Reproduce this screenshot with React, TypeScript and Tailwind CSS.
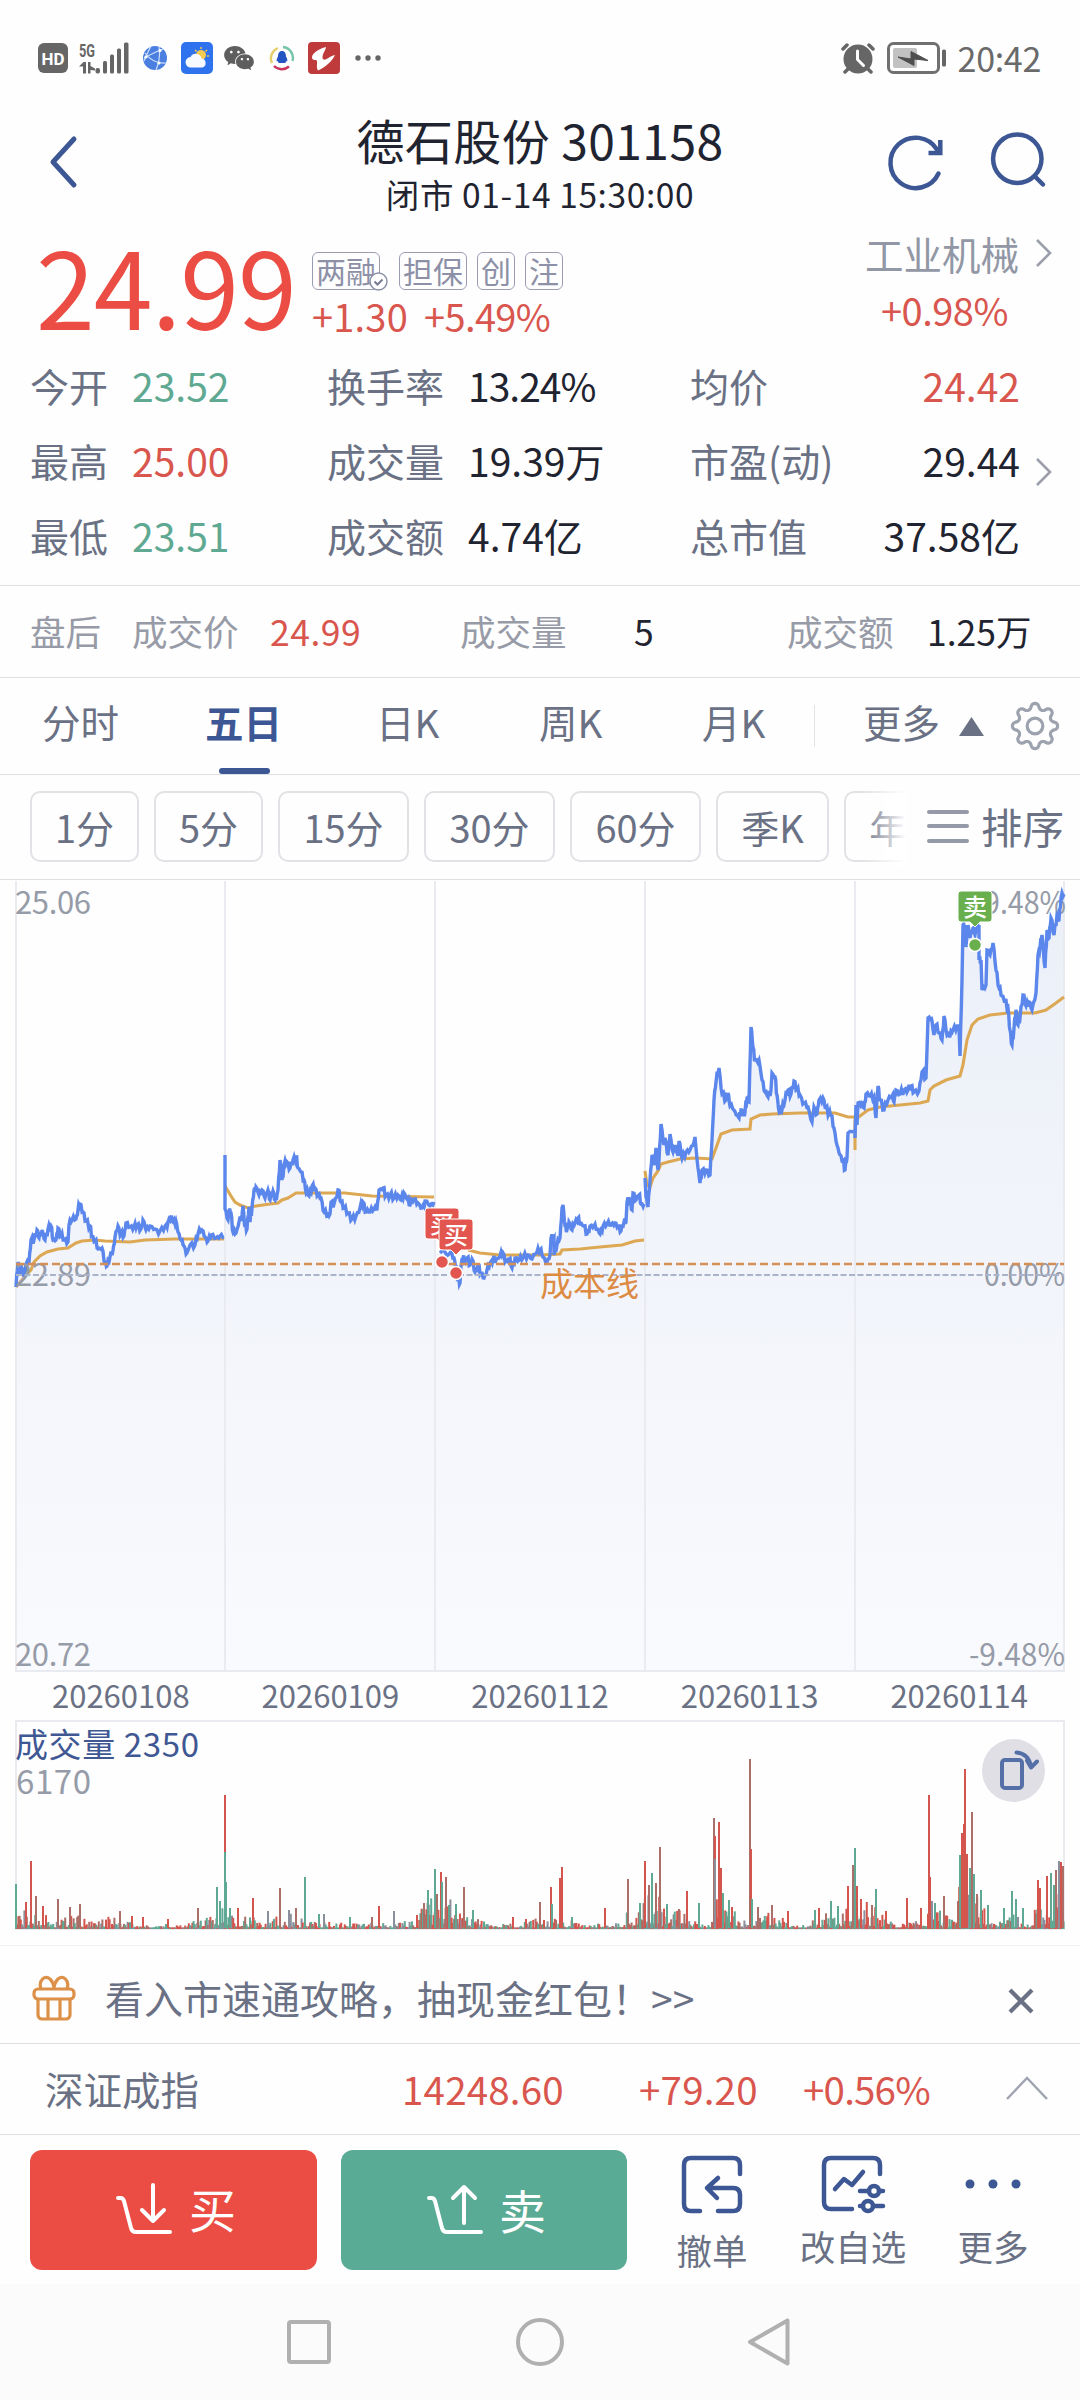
import { AiFillWechat } from "react-icons/ai";

type Point = [number, number];
type Quote = { label: string; value: string; color: string };

const RED = "#d4554d";
const GREEN = "#5fa893";
const GRAY = "#8b8f9c";
const BROWN = "#a96f68";

// three columns of the quote table, top to bottom
const openQuotes: Quote[] = [
  { label: "今开", value: "23.52", color: "text-[#5fa993]" },
  { label: "最高", value: "25.00", color: "text-[#d9564e]" },
  { label: "最低", value: "23.51", color: "text-[#5fa993]" },
];
const volumeQuotes: Quote[] = [
  { label: "换手率", value: "13.24%", color: "text-[#1f2430] tracking-[-1px]" },
  { label: "成交量", value: "19.39万", color: "text-[#1f2430]" },
  { label: "成交额", value: "4.74亿", color: "text-[#1f2430]" },
];
const valueQuotes: Quote[] = [
  { label: "均价", value: "24.42", color: "text-[#d9564e]" },
  { label: "市盈(动)", value: "29.44", color: "text-[#1f2430]" },
  { label: "总市值", value: "37.58亿", color: "text-[#1f2430]" },
];

const periods = [
  { name: "1分", width: "w-[109px]" },
  { name: "5分", width: "w-[109px]" },
  { name: "15分", width: "w-[131px]" },
  { name: "30分", width: "w-[131px]" },
  { name: "60分", width: "w-[131px]" },
  { name: "季K", width: "w-[113px]" },
  { name: "年K", width: "w-[113px]" },
];

const dates = ["20260108", "20260109", "20260112", "20260113", "20260114"];
const gridX = [16, 225, 435, 645, 855, 1064];

// one polyline per trading day
const priceDays: Point[][] = [
  [[16,1287],[18,1262],[20,1273],[22,1268],[24,1275],[26,1264],[29,1263],[31,1240],[34,1240],[37,1230],[39,1238],[42,1230],[45,1240],[48,1229],[51,1226],[53,1240],[56,1240],[58,1228],[61,1236],[64,1240],[68,1242],[69,1225],[72,1220],[76,1219],[78,1210],[80,1204],[83,1212],[86,1221],[90,1226],[92,1236],[95,1241],[98,1249],[102,1248],[105,1262],[107,1266],[110,1257],[113,1250],[115,1237],[118,1226],[121,1234],[124,1236],[126,1223],[130,1227],[134,1227],[137,1225],[141,1229],[143,1220],[146,1230],[150,1226],[155,1229],[160,1231],[165,1226],[168,1222],[171,1217],[173,1222],[176,1221],[178,1232],[181,1240],[184,1246],[187,1253],[190,1245],[195,1245],[198,1234],[202,1230],[205,1237],[208,1241],[211,1235],[216,1238],[220,1236],[224,1237]],
  [[225,1155],[225,1209],[228,1220],[229,1212],[231,1213],[233,1232],[236,1233],[239,1222],[242,1215],[243,1206],[245,1227],[247,1229],[249,1207],[250,1222],[252,1208],[254,1190],[256,1187],[259,1195],[262,1190],[265,1198],[268,1190],[270,1200],[273,1191],[275,1200],[277,1195],[278,1190],[280,1160],[282,1180],[284,1165],[287,1162],[290,1168],[293,1160],[296,1157],[298,1168],[301,1172],[304,1180],[306,1192],[309,1196],[312,1186],[315,1188],[318,1195],[321,1198],[324,1212],[328,1216],[330,1214],[331,1202],[334,1204],[338,1190],[341,1202],[344,1208],[348,1213],[352,1219],[356,1216],[360,1208],[363,1202],[366,1212],[370,1212],[374,1209],[377,1209],[379,1190],[383,1188],[386,1195],[390,1195],[394,1198],[398,1195],[401,1200],[404,1193],[407,1199],[410,1205],[414,1199],[418,1203],[422,1208],[425,1201],[430,1206],[434,1202]],
  [[440,1253],[450,1253],[454,1258],[456,1266],[458,1277],[460,1283],[461,1266],[463,1258],[465,1262],[467,1258],[470,1265],[472,1259],[475,1272],[478,1265],[481,1273],[484,1278],[487,1270],[490,1263],[493,1259],[496,1260],[500,1256],[503,1253],[506,1261],[509,1259],[512,1268],[515,1258],[519,1260],[523,1258],[528,1255],[532,1259],[537,1252],[540,1250],[543,1257],[547,1262],[550,1255],[551,1238],[554,1238],[554,1255],[557,1245],[560,1238],[562,1208],[563,1205],[565,1225],[567,1230],[569,1222],[572,1230],[575,1223],[578,1218],[580,1224],[584,1226],[587,1234],[590,1226],[594,1226],[597,1229],[600,1234],[603,1226],[607,1224],[611,1225],[615,1223],[618,1226],[621,1231],[624,1222],[626,1222],[627,1202],[630,1200],[632,1210],[633,1193],[636,1200],[639,1195],[641,1204],[644,1204]],
  [[645,1178],[646,1197],[648,1207],[650,1180],[652,1155],[654,1165],[656,1148],[658,1170],[659,1160],[661,1124],[664,1145],[665,1138],[668,1155],[670,1134],[673,1152],[676,1145],[678,1156],[679,1141],[682,1158],[686,1152],[690,1150],[694,1142],[695,1137],[698,1168],[700,1183],[702,1170],[706,1170],[710,1175],[712,1140],[714,1100],[716,1082],[719,1068],[722,1094],[726,1100],[728,1093],[730,1106],[734,1110],[737,1115],[739,1118],[741,1110],[743,1114],[745,1112],[747,1098],[749,1102],[751,1027],[753,1047],[755,1060],[759,1060],[762,1080],[765,1092],[768,1097],[771,1090],[772,1073],[775,1077],[777,1095],[779,1111],[782,1110],[785,1100],[788,1090],[791,1094],[794,1081],[797,1090],[800,1095],[804,1103],[808,1107],[812,1122],[814,1107],[817,1114],[819,1100],[823,1098],[826,1108],[829,1113],[831,1115],[834,1128],[837,1145],[840,1155],[843,1162],[845,1170],[847,1158],[848,1133],[854,1131]],
  [[855,1138],[856,1105],[857,1125],[858,1103],[862,1103],[864,1108],[866,1094],[870,1096],[874,1097],[876,1118],[878,1086],[880,1100],[884,1110],[888,1100],[892,1096],[894,1102],[896,1090],[900,1094],[904,1090],[908,1090],[911,1086],[914,1092],[919,1091],[922,1072],[926,1078],[927,1050],[928,1018],[931,1017],[934,1035],[936,1025],[939,1033],[942,1040],[944,1016],[947,1035],[950,1036],[953,1030],[957,1026],[959,1027],[960,1056],[962,980],[963,925],[965,925],[966,947],[968,925],[970,938],[973,928],[975,935],[977,926],[979,925],[979,960],[981,960],[982,990],[986,985],[987,950],[990,955],[993,943],[996,970],[999,988],[1002,996],[1005,1000],[1008,1008],[1010,1030],[1012,1045],[1014,1028],[1016,1010],[1018,1025],[1020,1018],[1023,995],[1026,1006],[1029,1002],[1032,1010],[1036,993],[1038,955],[1040,948],[1042,935],[1045,968],[1047,930],[1049,938],[1051,918],[1054,935],[1057,915],[1059,920],[1061,898],[1064,894]],
];

const averageDays: Point[][] = [
  [[16,1287],[22,1280],[28,1273],[31,1270],[34,1262],[40,1256],[47,1252],[58,1249],[68,1248],[76,1243],[82,1241],[95,1240],[105,1241],[130,1242],[145,1240],[175,1239],[224,1239]],
  [[225,1186],[228,1191],[231,1196],[235,1202],[240,1205],[248,1208],[256,1206],[270,1204],[278,1203],[282,1200],[288,1198],[296,1193],[310,1193],[345,1193],[372,1196],[434,1197]],
  [[468,1250],[480,1253],[500,1255],[540,1255],[560,1254],[562,1250],[580,1249],[600,1247],[622,1245],[635,1241],[644,1240]],
  [[645,1171],[647,1185],[650,1187],[653,1178],[658,1171],[661,1164],[668,1162],[680,1159],[696,1158],[712,1159],[716,1148],[721,1134],[732,1130],[750,1129],[751,1119],[760,1115],[772,1114],[800,1113],[835,1113],[848,1117],[854,1117]],
  [[855,1150],[855,1120],[860,1116],[868,1110],[880,1107],[900,1105],[920,1103],[928,1101],[930,1090],[934,1086],[946,1080],[960,1076],[963,1065],[967,1040],[972,1025],[978,1019],[990,1015],[1008,1013],[1035,1013],[1046,1010],[1056,1003],[1064,997]],
];

// usual bar height along the volume pane
const volumeLevel: Point[] = [[16,16],[40,16],[55,8],[75,14],[90,6],[105,12],[130,6],[150,3],[175,5],[190,8],[210,12],[222,18],[235,20],[255,10],[290,14],[310,7],[350,6],[395,5],[415,12],[440,36],[458,20],[475,12],[490,4],[520,5],[540,10],[565,8],[600,5],[612,3],[620,12],[635,18],[655,35],[665,20],[690,16],[700,5],[710,3],[713,40],[722,40],[730,18],[745,10],[755,18],[775,12],[785,10],[800,2],[830,16],[850,24],[858,35],[875,20],[895,6],[920,8],[935,20],[955,6],[962,60],[972,55],[985,20],[1000,8],[1015,15],[1030,2],[1040,40],[1050,20],[1064,55]];

// x, height, colour of the bars that stand out
const volumePeaks: [number, number, string][] = [
  [16,44,GREEN],[31,67,RED],[26,26,RED],[36,32,BROWN],[43,22,RED],[58,29,BROWN],[70,21,BROWN],[80,24,BROWN],[120,17,BROWN],[132,12,RED],[143,11,RED],[168,9,RED],[198,20,BROWN],[217,41,GREEN],[220,27,GREEN],[225,133,RED],[225,76,GREEN],[226,46,GREEN],[230,20,GREEN],[238,20,RED],[253,30,RED],[268,17,GRAY],[280,40,BROWN],[289,18,GRAY],[296,20,BROWN],[305,51,GREEN],[319,14,GREEN],[324,14,GRAY],[350,11,GREEN],[372,11,BROWN],[379,22,RED],[394,17,GRAY],[417,13,RED],[424,25,BROWN],[428,38,GREEN],[435,59,GREEN],[437,34,BROWN],[441,56,RED],[442,46,GREEN],[446,51,BROWN],[449,23,GREEN],[456,24,GREEN],[464,41,BROWN],[473,18,GREEN],[513,11,RED],[526,9,RED],
  [540,26,BROWN],[551,41,RED],[552,24,GREEN],[562,61,RED],[560,50,RED],[572,11,GREEN],[605,20,RED],[628,49,BROWN],[640,25,GREEN],[645,67,RED],[649,43,BROWN],[652,55,GREEN],[656,45,BROWN],[660,81,BROWN],[667,24,GREEN],[679,19,BROWN],[687,37,RED],[699,25,GREEN],[714,110,BROWN],[715,92,RED],[715,69,GRAY],[719,106,RED],[721,60,RED],[723,35,GREEN],[729,28,GREEN],[732,21,RED],[750,169,BROWN],[751,79,RED],[752,29,GREEN],[758,21,BROWN],[772,23,BROWN],[788,17,RED],[815,18,GREEN],[819,20,RED],[831,27,GREEN],[838,22,GREEN],[848,42,RED],[853,63,BROWN],[855,80,GREEN],[857,42,RED],[861,29,RED],[872,23,BROWN],[876,39,GREEN],[886,17,RED],[907,30,RED],[921,20,RED],[929,133,RED],[930,51,RED],[932,27,GRAY],[935,25,GREEN],[944,32,BROWN],[960,73,GREEN],[962,95,RED],[964,104,RED],[965,159,RED],[967,74,RED],[970,60,GREEN],[972,116,BROWN],[974,54,GREEN],[977,34,BROWN],[981,38,GREEN],[988,23,GREEN],[1004,20,GREEN],[1012,37,GREEN],[1016,29,GREEN],[1023,20,GREEN],[1038,48,RED],[1040,40,RED],[1047,52,RED],[1051,55,GREEN],[1054,43,GREEN],[1056,58,BROWN],[1059,67,GRAY],[1061,66,RED],[1063,62,BROWN],
];

// repeatable noise between 0 and 1
function noise(n: number) {
  const v = Math.sin(n * 12.9898 + 4.1) * 43758.5453;
  return v - Math.floor(v);
}

function roughen(points: Point[]): Point[] {
  const out: Point[] = [];
  points.forEach(([x, y], i) => {
    out.push([x, y]);
    const after = points[i + 1];
    if (after && after[0] - x >= 2) {
      out.push([x + (after[0] - x) * 0.35, y + (after[1] - y) * 0.35 - 4 * noise(x)]);
      out.push([x + (after[0] - x) * 0.7, y + (after[1] - y) * 0.7 + 4 * noise(x + 7)]);
    }
  });
  return out;
}

function toPath(points: Point[]) {
  return "M" + points.map(([x, y]) => `${x.toFixed(1)} ${y.toFixed(1)}`).join("L");
}

function levelAt(x: number) {
  const i = volumeLevel.findIndex((p) => p[0] >= x);
  if (i <= 0) return volumeLevel[0][1];
  const [x0, y0] = volumeLevel[i - 1];
  const [x1, y1] = volumeLevel[i];
  return y0 + ((y1 - y0) * (x - x0)) / (x1 - x0);
}

const gearPath =
  toPath(
    Array.from({ length: 128 }, (_, i): Point => {
      const a = (i / 128) * Math.PI * 2;
      const c = Math.cos(8 * a);
      const r = 19.8 + 2.8 * Math.sign(c) * Math.pow(Math.abs(c), 0.6);
      return [25 + r * Math.sin(a), 25 - r * Math.cos(a)];
    })
  ) + "Z";

function StatusBar() {
  return (
    <div className="flex h-[111px] items-center pt-[5px] pl-[38px] pr-[39px]">
      <svg width="30" height="30" viewBox="0 0 30 30">
        <rect width="30" height="30" rx="6" fill="#666" />
        <text x="3.500" y="21.500" fontSize="17" fontWeight="700" fill="#fff" fontFamily="Roboto, sans-serif" textLength="23" lengthAdjust="spacingAndGlyphs">HD</text>
      </svg>
      <svg className="ml-[11px] overflow-visible" width="50" height="32" viewBox="79 42 50 32" fill="#666">
        <text x="79" y="56.500" fontSize="19" fontWeight="700" fontFamily="Roboto, sans-serif" textLength="16" lengthAdjust="spacingAndGlyphs">5G</text>
        <path d="M79 66.500l4.500-4.500h2.500v11.500h-3v-7zM88 62h2.500v4l4.500 2.500v2l-4.500-.5v3.500H88z" />
        <rect x="95.500" y="68" width="4.500" height="5.500" rx="2" />
        <rect x="103" y="61" width="4" height="12.500" rx="1.500" />
        <rect x="110" y="54.500" width="4" height="19" rx="1.500" />
        <rect x="117" y="48.500" width="4" height="25" rx="1.500" />
        <rect x="124" y="42.500" width="4.500" height="31" rx="1.500" />
      </svg>
      <svg className="ml-[14px]" width="24" height="24" viewBox="0 0 24 24">
        <circle cx="12" cy="12" r="12" fill="#4a7fe0" />
        <path d="M1 12Q12 6 20 3M16 1Q18 12 13 24M2 7Q10 18 23 17M1 15Q3 10 8 0" fill="none" stroke="#cfe0ff" strokeWidth="1.200" />
        <circle cx="17" cy="4.500" r="1.600" fill="#fff" />
        <circle cx="3" cy="11" r="1.600" fill="#fff" />
        <circle cx="16" cy="17" r="1.600" fill="#fff" />
      </svg>
      <svg className="ml-[14px]" width="32" height="32" viewBox="0 0 32 32">
        <rect width="32" height="32" rx="5" fill="#2f72ee" />
        <path d="M20 5v2M26 8l-1.500 1.500M14 8l1.500 1.500M28 14h-2" stroke="#f3c64e" strokeWidth="1.500" />
        <circle cx="20" cy="13" r="5" fill="#f8cb4f" />
        <path d="M10 25.500a5.200 5.200 0 01-.5-10.400 6 6 0 0111.200 1.500 4.600 4.600 0 01.8 8.900z" fill="#f6f9ff" />
      </svg>
      <AiFillWechat className="ml-[9px]" size={34} color="#5e5e5e" />
      <svg className="ml-[13px]" width="26" height="26" viewBox="0 0 26 26" fill="none" strokeWidth="2.400">
        <path d="M3 18A11 11 0 019 3" stroke="#e6cf6a" />
        <path d="M14 2A11 11 0 0123.500 16" stroke="#74c4ab" />
        <path d="M5 21A11 11 0 0020 21.500" stroke="#c8345c" />
        <path d="M13 6c3 0 4 2.500 4 5.500 1 1.500 1.500 3 1.300 5-.8 0-1-.4-1-.4l-1 2H9.700l-1-2s-.2.400-1 .4c-.2-2 .3-3.500 1.300-5C9 8.500 10 6 13 6z" fill="#2453c4" />
      </svg>
      <svg className="ml-[13px]" width="32" height="32" viewBox="0 0 32 32">
        <rect width="32" height="32" rx="4" fill="#bf3a3a" />
        <path d="M18 5C11 7 4 11 4 15.500c0 2 1.500 2.500 4 2.500 2.500.3-.5 7 2 10.500 7-3 14-9 17-15.500-3.500.5-7 3.500-9.500 4.500-3 .8-3.500-1.500-2.500-5C16 9.500 18 7 18 5z" fill="#fff" />
      </svg>
      <svg className="ml-[15px]" width="26" height="6" viewBox="0 0 26 6" fill="#666">
        <circle cx="3" cy="3" r="2.700" />
        <circle cx="13" cy="3" r="2.700" />
        <circle cx="23" cy="3" r="2.700" />
      </svg>
      <svg className="ml-auto" width="34" height="32" viewBox="0 0 34 32">
        <circle cx="17" cy="17" r="14.500" fill="#666" />
        <path d="M2 7l4-4M32 7l-4-4M4 30l4-4M30 30l-4-4" stroke="#666" strokeWidth="3.500" strokeLinecap="round" />
        <path d="M16.500 9v8.500l6 6" fill="none" stroke="#fff" strokeWidth="3" strokeLinecap="round" />
      </svg>
      <svg className="ml-3" width="60" height="32" viewBox="0 0 60 32">
        <rect x="1.500" y="1.500" width="50" height="29" rx="5" fill="#fff" stroke="#707070" strokeWidth="3" />
        <rect x="6" y="6" width="24" height="20" rx="2" fill="#c2c2c2" />
        <path d="M11 15l13 2v-7.500l17 9L27 17v6.500z" fill="#4f4f4f" stroke="#4f4f4f" strokeWidth="1" />
        <rect x="55" y="7.500" width="4" height="17" rx="1.500" fill="#666" />
      </svg>
      <span className="ml-[11px] text-[34px] leading-10 tracking-[-0.300px] text-[#6a6a6a]">20:42</span>
    </div>
  );
}

function Header() {
  return (
    <div className="flex h-[105px] items-start text-[#1f2430]">
      <div className="w-[270px] pt-[23px] pl-[47px]">
        <svg width="34" height="56" viewBox="0 0 34 56">
          <path d="M27 5L6 28l21 23" fill="none" stroke="#3c5794" strokeWidth="5" strokeLinecap="round" strokeLinejoin="round" />
        </svg>
      </div>
      <div className="flex flex-1 flex-col items-center">
        <h1 className="text-[48px] leading-14 tracking-[0.400px] whitespace-nowrap">德石股份 301158</h1>
        <p className="mt-[6px] text-[33.500px] leading-[42px] tracking-[0.600px] whitespace-nowrap">闭市 01-14 15:30:00</p>
      </div>
      <div className="flex w-[270px] pt-[20px] pl-[76px]">
        <svg width="60" height="64" viewBox="886 131 60 64" fill="none" stroke="#3c5794" strokeWidth="4.500">
          <path d="M938.500 173.500A25.200 25.200 0 11937 149.500" strokeLinecap="round" />
          <path d="M940.300 140v13H928.500" />
        </svg>
        <svg className="ml-[42px]" width="60" height="64" viewBox="988 131 60 64" fill="none" stroke="#3c5794" strokeWidth="4.500">
          <circle cx="1017.300" cy="158.800" r="24.200" />
          <path d="M1035 176.500l8 8" strokeLinecap="round" />
        </svg>
      </div>
    </div>
  );
}

function Tag({ children }: { children: string }) {
  return (
    <span className="flex h-[38px] items-center rounded-[6px] border-[1.500px] border-[#9a9db2] px-[3px] pb-[2px] text-[30px] leading-9 text-[#8d90a7]">
      {children}
    </span>
  );
}

function Chevron() {
  return (
    <svg width="18" height="30" viewBox="0 0 18 30">
      <path d="M2 2l13 13L2 28" fill="none" stroke="#9a9fab" strokeWidth="2.600" />
    </svg>
  );
}

function PriceSummary() {
  return (
    <div className="flex h-[132px] items-start">
      <div className="mt-[23px] ml-[36px] w-[276px] text-[106px] leading-[90px] tracking-[-1px] text-[#eb4d44]">24.99</div>
      <div className="mt-[36px]">
        <div className="flex">
          <div className="relative">
            <Tag>两融</Tag>
            <svg className="absolute -right-[8px] -bottom-[1px]" width="19" height="19" viewBox="0 0 19 19">
              <circle cx="9.500" cy="9.500" r="8.500" fill="#fff" stroke="#8d90a7" strokeWidth="1.500" />
              <path d="M5.500 9.500l3 3 5-5" fill="none" stroke="#777b94" strokeWidth="2" />
            </svg>
          </div>
          <div className="ml-[19px]"><Tag>担保</Tag></div>
          <div className="ml-[10px]"><Tag>创</Tag></div>
          <div className="ml-[10px]"><Tag>注</Tag></div>
        </div>
        <div className="mt-[6px] flex gap-4 text-[38px] leading-10 text-[#d9564e]">
          <span className="tracking-[0.200px]">+1.30</span>
          <span className="tracking-[-0.600px]">+5.49%</span>
        </div>
      </div>
      <div className="mt-[17px] mr-[27px] ml-auto w-[188px]">
        <div className="flex items-center justify-between text-[38.500px] leading-10 text-[#9297a5]">
          工业机械
          <Chevron />
        </div>
        <p className="mt-[17px] pl-[16px] text-[38px] leading-10 tracking-[-0.500px] text-[#d9564e]">+0.98%</p>
      </div>
    </div>
  );
}

function QuoteColumn({ quotes, labelWidth, right }: { quotes: Quote[]; labelWidth: string; right?: boolean }) {
  return (
    <div className={right ? "w-[330px]" : ""}>
      {quotes.map((q) => (
        <div key={q.label} className={"flex h-[75px] items-center " + (right ? "justify-between" : "")}>
          <span className={labelWidth + " text-[#6a7184]"}>{q.label}</span>
          <span className={q.color}>{q.value}</span>
        </div>
      ))}
    </div>
  );
}

function QuoteTable() {
  return (
    <div className="flex h-[238px] border-b border-[#dfe0e3] pl-[30px] text-[39px] leading-none whitespace-nowrap">
      <div className="w-[297px]"><QuoteColumn quotes={openQuotes} labelWidth="w-[102px]" /></div>
      <div className="w-[363px]"><QuoteColumn quotes={volumeQuotes} labelWidth="w-[141px]" /></div>
      <QuoteColumn quotes={valueQuotes} labelWidth="" right />
      <div className="pt-[109px] pl-[15px]"><Chevron /></div>
    </div>
  );
}

function AfterHours() {
  return (
    <div className="flex h-[92px] items-center border-b border-[#dfe0e3] pb-[2px] pl-[30px] text-[35.500px] leading-none text-[#979ba7]">
      <span className="w-[102px]">盘后</span>
      <span className="w-[138px]">成交价</span>
      <span className="w-[190px] tracking-[0.500px] text-[#d9564e]">24.99</span>
      <span className="w-[174px]">成交量</span>
      <span className="w-[153px] text-[#1f2430]">5</span>
      <span className="w-[140px]">成交额</span>
      <span className="text-[#1f2430]">1.25万</span>
    </div>
  );
}

function Tabs() {
  return (
    <div className="flex h-[97px] border-b border-[#dfe0e3] pl-[42px] text-[38.500px] leading-[87px] text-[#6a7184]">
      <span className="w-[163px]">分时</span>
      <div className="flex w-[171px] flex-col">
        <span className="font-bold text-[#3c5794]">五日</span>
        <span className="mt-[3px] ml-[14px] h-[6px] w-[51px] rounded-[3px] bg-[#3c5794]" />
      </div>
      <span className="w-[163px]">日K</span>
      <span className="w-[163px]">周K</span>
      <span className="w-[112px]">月K</span>
      <span className="mt-[27px] h-[42px] w-px bg-[#e2e3e7]" />
      <span className="ml-[48px] w-[96px]">更多</span>
      <svg className="mt-[39px]" width="25" height="19" viewBox="0 0 25 19">
        <path d="M12.500 0L25 19H0z" fill="#6a7184" />
      </svg>
      <svg className="mt-[23px] ml-[26px]" width="50" height="50" viewBox="0 0 50 50" fill="none" stroke="#9da2af" strokeWidth="3.200" strokeLinejoin="round">
        <path d={gearPath} />
        <circle cx="25" cy="25" r="7.800" />
      </svg>
    </div>
  );
}

function PeriodBar() {
  return (
    <div className="relative flex h-[105px] border-b border-[#dfe0e3] pt-4 pl-[30px]">
      <div className="flex w-[875px] gap-[15px] overflow-hidden">
        {periods.map((p) => (
          <span
            key={p.name}
            className={p.width + " flex h-[71px] shrink-0 items-center justify-center rounded-[10px] border-2 border-[#e1e2e5] text-[38px] leading-none text-[#6a7184]"}
          >
            {p.name}
          </span>
        ))}
      </div>
      {/* fade over the cut-off pill */}
      <div className="absolute top-3 left-[862px] h-20 w-[44px] bg-gradient-to-r from-white/0 to-white" />
      <svg className="mt-[17px] ml-[22px]" width="42" height="36" viewBox="0 0 42 36" stroke="#949aa8" strokeWidth="4" strokeLinecap="round">
        <path d="M2 4h38M2 18h38M2 33h38" />
      </svg>
      <span className="ml-[12px] h-[71px] text-[41.500px] leading-[70px] text-[#6a7184]">排序</span>
    </div>
  );
}

function TradeMarker({ x, y, dotX, dotY, text, color }: { x: number; y: number; dotX: number; dotY: number; text: string; color: string }) {
  return (
    <g>
      <circle cx={dotX} cy={dotY} r="6.500" fill={color} stroke="#fff" strokeWidth="1.500" />
      <path d={`M${x + 3} ${y}h28a3 3 0 013 3v25a3 3 0 01-3 3h-9l-5 5-5-5h-9a3 3 0 01-3-3v-25a3 3 0 013-3z`} fill={color} stroke="#fff" strokeWidth="1" />
      <text x={x + 17} y={y + 24.5} textAnchor="middle" fontSize="24" fontWeight="500" fill="#fff">{text}</text>
    </g>
  );
}

function PriceChart() {
  const days = priceDays.map(roughen);
  return (
    <svg className="block" width="1080" height="792" viewBox="0 880 1080 792">
      <defs>
        <linearGradient id="area" x1="0" y1="900" x2="0" y2="1671" gradientUnits="userSpaceOnUse">
          <stop offset="0" stopColor="#ebeff8" />
          <stop offset="1" stopColor="#f9fafd" />
        </linearGradient>
      </defs>
      {days.map((d, i) => (
        <path key={i} d={`${toPath(d)}L${gridX[i + 1]} ${d[d.length - 1][1]}V1671H${gridX[i]}V${d[0][1]}Z`} fill="url(#area)" />
      ))}
      <path d={gridX.map((x) => `M${x} 881V1671`).join("") + "M15 1671H1065"} stroke="#e9ebf0" strokeWidth="2" />
      <g fontSize="31" fill="#969ba8">
        <text x="15" y="914" textLength="76">25.06</text>
        <text x="1066" y="914" textAnchor="end" textLength="82" lengthAdjust="spacingAndGlyphs">9.48%</text>
        <text x="15" y="1666" textLength="76">20.72</text>
        <text x="1065" y="1666" textAnchor="end" textLength="96" lengthAdjust="spacingAndGlyphs">-9.48%</text>
      </g>
      {averageDays.map((d, i) => (
        <path key={i} d={toPath(d)} fill="none" stroke="#dda854" strokeWidth="3.100" />
      ))}
      {days.map((d, i) => (
        <path key={i} d={toPath(d)} fill="none" stroke="#5b86ec" strokeWidth="3.400" />
      ))}
      <g fontSize="31" fill="#969ba8">
        <text x="15" y="1285.500" textLength="76">22.89</text>
        <text x="1065" y="1285.500" textAnchor="end" textLength="81" lengthAdjust="spacingAndGlyphs">0.00%</text>
      </g>
      <path d="M16 1275H1064" stroke="#a9b4cb" strokeWidth="2" strokeDasharray="6 2.500" />
      <path d="M16 1264H1064" stroke="#d38f55" strokeWidth="2.300" strokeDasharray="8 4" />
      <text x="540" y="1296" fontSize="33" fill="#dd8b42">成本线</text>
      <TradeMarker x={425} y={1208} dotX={442} dotY={1262} text="买" color="#e2564f" />
      <TradeMarker x={439} y={1219} dotX={456} dotY={1273} text="买" color="#e2564f" />
      <TradeMarker x={958} y={891} dotX={975} dotY={945} text="卖" color="#6aaf4e" />
    </svg>
  );
}

function VolumeChart() {
  const bars = Array.from({ length: 874 }, (_, i) => {
    const x = 16 + i * 1.2;
    const n = noise(i);
    const c = noise(i + 900);
    return {
      x,
      h: Math.max(1.5, levelAt(x) * (0.12 + 0.9 * n * n + 0.15 * n)),
      color: c < 0.36 ? RED : c < 0.54 ? BROWN : c < 0.88 ? GREEN : GRAY,
    };
  });
  return (
    <svg className="block" width="1080" height="225" viewBox="0 1720 1080 225">
      <path d="M16 1929V1721H1064V1929Z" fill="none" stroke="#e9ebf0" strokeWidth="2" />
      {bars.map((b, i) => (
        <rect key={i} x={b.x - 1} y={1929 - b.h} width="2" height={b.h} fill={b.color} />
      ))}
      {volumePeaks.map(([x, h, color], i) => (
        <rect key={i} x={x - 1} y={1928 - h} width="2" height={h} fill={color} />
      ))}
      <text x="15" y="1757" fontSize="33" fill="#3f5793" textLength="184">成交量 2350</text>
      <text x="16" y="1793.500" fontSize="33" fill="#969ba8" textLength="75">6170</text>
      <circle cx="1013.500" cy="1770.500" r="31.500" fill="#e0dfe6" />
      <g fill="none" stroke="#5570a6" strokeWidth="4">
        <rect x="1002" y="1760" width="20" height="28" rx="3" />
        <path d="M1016.500 1752.500q12 1 14.500 14M1027 1760.500l4 7 6-6" strokeLinecap="round" strokeLinejoin="round" />
      </g>
    </svg>
  );
}

function PromoBanner() {
  return (
    <div className="flex h-[99px] items-center border-t border-b border-t-[#f2f2f4] border-b-[#dfe0e3] pt-[6px] pl-[32px] text-[#6a7184]">
      <svg width="44" height="46" viewBox="0 0 44 46" fill="none" stroke="#dc9048" strokeWidth="3.200">
        <rect x="2" y="14" width="40" height="10" rx="4" />
        <path d="M6 24v16a4 4 0 004 4h24a4 4 0 004-4V24M16 24v20M28 24v20" />
        <path d="M9 14C6 5 13 0 18 4q4 4 4 10q0-6 4-10c5-4 12 1 9 10" />
      </svg>
      <span className="ml-[29px] text-[39px] leading-none whitespace-nowrap">看入市速通攻略，抽现金红包！&gt;&gt;</span>
      <svg className="mt-[6px] mr-[46px] ml-auto" width="26" height="26" viewBox="0 0 26 26">
        <path d="M2 2l22 22M24 2L2 24" stroke="#6a7184" strokeWidth="4.200" />
      </svg>
    </div>
  );
}

function IndexRow() {
  return (
    <div className="flex h-[91px] items-center border-b border-[#dfe0e3] pb-[2px] pl-[45px] text-[38.500px] leading-none text-[#d9564e]">
      <span className="w-[357px] text-[#6a7184]">深证成指</span>
      <span className="w-[237px] tracking-[0.200px]">14248.60</span>
      <span className="w-[164px] tracking-[0.200px]">+79.20</span>
      <span className="tracking-[-0.800px]">+0.56%</span>
      <svg className="mr-[31px] ml-auto" width="44" height="26" viewBox="0 0 44 26">
        <path d="M2 24L22 3l20 21" fill="none" stroke="#9fa4b0" strokeWidth="2.500" />
      </svg>
    </div>
  );
}

function CartIcon({ up }: { up?: boolean }) {
  return (
    <svg width="60" height="54" viewBox="0 0 60 54" fill="none" stroke="#fff" strokeWidth="4" strokeLinecap="round" strokeLinejoin="round">
      <path d="M4 15h2.500q2.500 0 3.500 3l7 27q1 4 5 4h34" />
      {up ? <path d="M39 40V4M28 15L39 4l11 11" /> : <path d="M39 2v36M28 27l11 11 11-11" />}
    </svg>
  );
}

function ActionBar() {
  return (
    <div className="flex h-[149px] pt-[15px] pl-[30px] text-[35.500px] leading-[40px] text-[#6a7184]">
      <button className="flex h-[120px] w-[287px] items-center rounded-[12px] bg-[#eb4d44] pl-[84px] text-[47px] leading-none text-white">
        <CartIcon />
        <span className="ml-[15px] pb-[5px]">买</span>
      </button>
      <button className="ml-6 flex h-[120px] w-[286px] items-center rounded-[12px] bg-[#5aab95] pl-[84px] text-[47px] leading-none text-white">
        <CartIcon up />
        <span className="ml-[14px] pb-[4px]">卖</span>
      </button>
      <div className="ml-[34px] flex w-[102px] flex-col items-center pt-[4px]">
        <svg width="64" height="62" viewBox="0 0 64 62" fill="none" stroke="#3c5794" strokeWidth="4.500" strokeLinecap="round" strokeLinejoin="round">
          <path d="M60 20V11q0-7-7-7H11q-7 0-7 7v39q0 7 7 7h9M38 57h15q7 0 7-7V41q0-7-7-7H27M38 24L27 34l10 10" />
        </svg>
        <span className="mt-[14px]">撤单</span>
      </div>
      <div className="ml-[20px] flex w-[140px] flex-col items-center pt-[4px]">
        <svg width="66" height="62" viewBox="0 0 66 62" fill="none" stroke="#3c5794" strokeWidth="4.500" strokeLinecap="round" strokeLinejoin="round">
          <path d="M60 20V11q0-7-7-7H11q-7 0-7 7v37q0 7 7 7h21" />
          <path d="M15 35l9-10 8 6 11-13" />
          <circle cx="54" cy="37" r="5" />
          <circle cx="48" cy="52" r="5" />
          <path d="M40 37h9M59 37h4M40 52h3M53 52h10" />
        </svg>
        <span className="mt-[10px]">改自选</span>
      </div>
      <div className="ml-[20px] flex w-[100px] flex-col items-center pt-[28px]">
        <svg width="56" height="12" viewBox="0 0 56 12" fill="#3c5794">
          <circle cx="5" cy="6" r="4.500" />
          <circle cx="28" cy="6" r="4.500" />
          <circle cx="51" cy="6" r="4.500" />
        </svg>
        <span className="mt-[36px]">更多</span>
      </div>
    </div>
  );
}

function SystemNav() {
  return (
    <div className="flex h-[116px] items-center justify-center gap-[181px] bg-[#fbfbfb]">
      <svg width="50" height="50" viewBox="0 0 50 50" fill="none" stroke="#b0b0b0" strokeWidth="4">
        <rect x="5" y="5" width="40" height="40" rx="2" />
      </svg>
      <svg width="50" height="50" viewBox="0 0 50 50" fill="none" stroke="#b0b0b0" strokeWidth="4">
        <circle cx="25" cy="25" r="22" />
      </svg>
      <svg width="50" height="50" viewBox="0 0 50 50" fill="none" stroke="#b0b0b0" strokeWidth="4" strokeLinejoin="round">
        <path d="M41.500 3.500v43L4 25z" />
      </svg>
    </div>
  );
}

export default function App() {
  return (
    <main lang="zh-CN" className="h-[2400px] w-[1080px] overflow-hidden bg-[#fefefe] font-['Noto_Sans_CJK_SC','Noto_Sans',sans-serif]">
      <StatusBar />
      <Header />
      <PriceSummary />
      <QuoteTable />
      <AfterHours />
      <Tabs />
      <PeriodBar />
      <PriceChart />
      <div className="grid h-12 grid-cols-5 items-center pr-[16px] pb-[3px] pl-[16px] text-center text-[31px] leading-none text-[#6a7184]">
        {dates.map((d) => (
          <span key={d}>{d}</span>
        ))}
      </div>
      <VolumeChart />
      <PromoBanner />
      <IndexRow />
      <ActionBar />
      <SystemNav />
    </main>
  );
}
